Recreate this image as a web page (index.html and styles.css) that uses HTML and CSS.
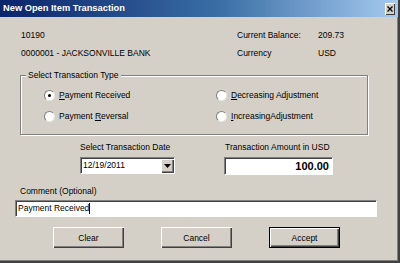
FILE: index.html
```html
<!DOCTYPE html>
<html lang="en">
<head>
    <meta charset="UTF-8">
    <meta name="viewport" content="width=device-width, initial-scale=1.0">
    <title>New Open Item Transaction</title>
    <link rel="stylesheet" href="styles.css">
</head>
<body>
    <div class="window">
        <div class="titlebar">
            <span class="title">New Open Item Transaction</span>
            <span class="close">
                <svg width="6" height="6" viewBox="0 0 6 6"><path d="M0.5 0.5 L5.5 5.5 M5.5 0.5 L0.5 5.5" stroke="#000" stroke-width="1.3"/></svg>
            </span>
        </div>

        <div class="info">
            <span>10190</span>
            <span>Current Balance:</span>
            <span>209.73</span>
            <span>0000001 - JACKSONVILLE BANK</span>
            <span>Currency</span>
            <span>USD</span>
        </div>

        <div class="group">
            <span class="group-title">Select Transaction Type</span>
            <div class="radios">
                <div class="radio"><span class="dot checked"></span><span><u>P</u>ayment Received</span></div>
                <div class="radio"><span class="dot"></span><span><u>D</u>ecreasing Adjustment</span></div>
                <div class="radio"><span class="dot"></span><span>Payment <u>R</u>eversal</span></div>
                <div class="radio"><span class="dot"></span><span><u>I</u>ncreasingAdjustment</span></div>
            </div>
        </div>

        <div class="fields">
            <div class="date-col">
                <div class="label">Select Transaction Date</div>
                <div class="combo">
                    <span class="combo-text">12/19/2011</span>
                    <span class="combo-btn">
                        <svg width="7" height="4" viewBox="0 0 7 4"><path d="M0 0 H7 L3.5 4 Z" fill="#000"/></svg>
                    </span>
                </div>
            </div>
            <div class="amount-col">
                <div class="label">Transaction Amount in USD</div>
                <div class="edit amount">100.00</div>
            </div>
        </div>

        <div class="comment">
            <div class="label">Comment (Optional)</div>
            <div class="edit comment-box">Payment Received<span class="caret"></span></div>
        </div>

        <div class="buttons">
            <button class="btn">Clear</button>
            <button class="btn">Cancel</button>
            <button class="btn default">Accept</button>
        </div>
    </div>
</body>
</html>
```

FILE: styles.css
```css
body {
    margin: 0;
    padding: 0;
    background-color: #d4d0c8;
    font-family: "Liberation Sans", Arial, sans-serif;
    font-size: 8.5px;
    line-height: 11px;
    color: #000;
}
.window {
    width: 400px;
    height: 263px;
    box-sizing: border-box;
    background-color: #d4d0c8;
    border-right: 2px solid #404040;
    border-bottom: 2px solid #404040;
    box-shadow: inset -1px -1px #808080;
    overflow: hidden;
}
.titlebar {
    height: 17px;
    display: flex;
    align-items: center;
    justify-content: space-between;
    padding: 0 3px 0 3px;
    background: linear-gradient(to right, #0a246a, #3a6ea5 55%, #a6caf0);
}
.title {
    color: white;
    font-weight: bold;
    font-size: 9.3px;
    line-height: 17px;
}
.close {
    width: 10px;
    height: 12px;
    margin-top: 1px;
    display: flex;
    align-items: center;
    justify-content: center;
    background-color: #d4d0c8;
    box-shadow: inset 1px 1px #fff, inset -1px -1px #404040;
}
.info {
    display: grid;
    grid-template-columns: 216px 81px auto;
    grid-auto-rows: 18px;
    align-items: center;
    margin-top: 9px;
    padding-left: 21px;
}
.group {
    width: 348px;
    box-sizing: border-box;
    margin: 13px 0 0 20px;
    border: 1px solid #808080;
    box-shadow: inset 1px 1px #fff, 1px 1px #fff;
    padding-bottom: 7px;
}
.group-title {
    display: table;
    margin: -6px 0 0 5px;
    padding: 0 2px;
    background-color: #d4d0c8;
}
.radios {
    display: grid;
    grid-template-columns: 172px auto;
    grid-auto-rows: 21px;
    margin-top: 4px;
    padding-left: 23px;
}
.radio {
    display: flex;
    align-items: center;
}
.dot {
    width: 11px;
    height: 11px;
    box-sizing: border-box;
    margin-right: 4px;
    border-radius: 50%;
    background-color: white;
    border: 1px solid;
    border-color: #808080 #e8e6e2 #e8e6e2 #808080;
    display: flex;
    align-items: center;
    justify-content: center;
}
.dot.checked::after {
    content: "";
    width: 3px;
    height: 3px;
    border-radius: 50%;
    background-color: #000;
}
.fields {
    display: flex;
    margin-top: 7px;
    padding-left: 80px;
}
.date-col {
    width: 144px;
}
.label {
    height: 11px;
}
.amount-col .label {
    padding-left: 1px;
}
.combo {
    width: 95px;
    height: 17px;
    box-sizing: border-box;
    margin-top: 4px;
    display: flex;
    align-items: stretch;
    background-color: white;
    border: 1px solid;
    border-color: #808080 #fff #fff #808080;
    box-shadow: inset 1px 1px #404040;
}
.combo-text {
    flex: 1;
    padding: 2px 0 0 2px;
}
.combo-btn {
    width: 13px;
    display: flex;
    align-items: center;
    justify-content: center;
    margin: 1px 0 0 0;
    background-color: #d4d0c8;
    box-shadow: inset 1px 1px #fff, inset -1px -1px #404040, inset -2px -2px #808080;
}
.edit {
    box-sizing: border-box;
    background-color: white;
    border: 1px solid;
    border-color: #808080 #fff #fff #808080;
    box-shadow: inset 1px 1px #404040;
}
.amount {
    width: 109px;
    height: 18px;
    margin-top: 4px;
    padding-right: 3px;
    text-align: right;
    font-weight: bold;
    font-size: 11px;
    line-height: 16px;
}
.comment {
    margin-top: 11px;
    padding-left: 15px;
}
.comment .label {
    padding-left: 5px;
}
.comment-box {
    width: 362px;
    height: 17px;
    margin-top: 3px;
    padding: 2px 0 0 2px;
    display: flex;
    align-items: flex-start;
}
.caret {
    width: 1px;
    height: 11px;
    background-color: #000;
}
.buttons {
    display: flex;
    gap: 37px;
    margin-top: 10px;
    padding-left: 53px;
}
.btn {
    width: 71px;
    height: 21px;
    padding: 0;
    border: none;
    background-color: #d4d0c8;
    font-family: "Liberation Sans", Arial, sans-serif;
    font-size: 8.5px;
    color: #000;
    box-shadow: inset 1px 1px #fff, inset -1px -1px #404040, inset -2px -2px #808080;
}
.btn.default {
    box-shadow: inset 0 0 0 1px #000, inset 2px 2px #fff, inset -2px -2px #404040, inset -3px -3px #808080;
}
```
